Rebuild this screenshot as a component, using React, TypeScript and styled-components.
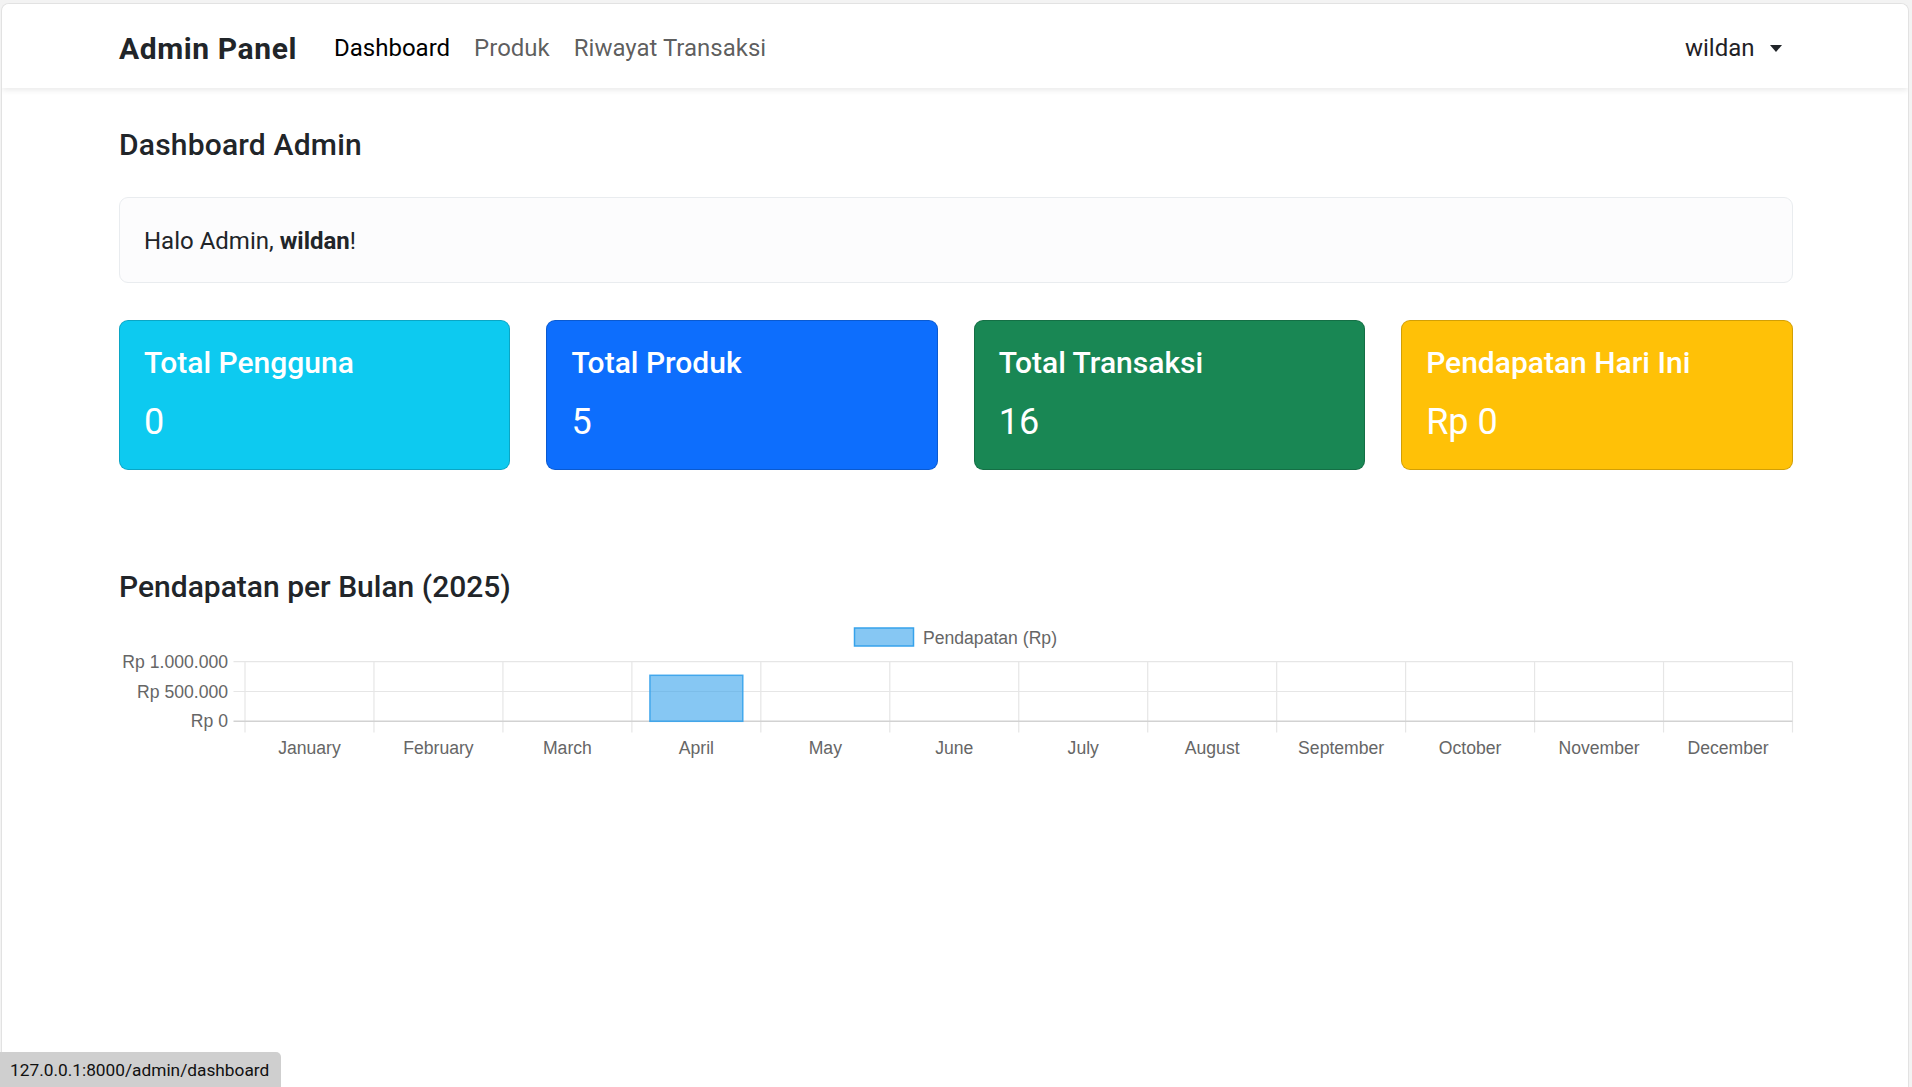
import React from "react";
import styled, { createGlobalStyle } from "styled-components";

const GlobalStyle = createGlobalStyle`
  html, body {
    margin: 0;
    padding: 0;
    background: #f3f3f3;
    font-family: Roboto, "Liberation Sans", Arial, sans-serif;
    color: #212529;
  }
  * { box-sizing: border-box; }
`;

const Window = styled.div`
  margin: 3px 3px 0 1px;
  min-height: 1084px;
  background: #ffffff;
  border: 1px solid #e2e2e2;
  border-bottom: none;
  border-radius: 8px 8px 0 0;
  overflow: hidden;
`;

const Navbar = styled.nav`
  height: 84px;
  background: #ffffff;
  box-shadow: 0 2px 6px rgba(0, 0, 0, 0.09);
  position: relative;
  z-index: 1;
`;

const Container = styled.div`
  width: 1710px;
  margin: 0 auto;
  padding: 0 17.5px 0 19px;
`;

const NavInner = styled(Container)`
  height: 100%;
  display: flex;
  align-items: center;
  padding-top: 4px;
`;

const Brand = styled.a`
  font-size: 30px;
  font-weight: 700;
  line-height: 45px;
  letter-spacing: 0.6px;
  color: #212529;
  text-decoration: none;
  margin-right: 25px;
`;

const NavList = styled.ul`
  display: flex;
  list-style: none;
  margin: 0;
  padding: 0;
`;

const NavLink = styled.a<{ $active?: boolean }>`
  display: block;
  padding: 12px 12px;
  font-size: 24px;
  line-height: 36px;
  text-decoration: none;
  color: ${(p) => (p.$active ? "#000000" : "rgba(0, 0, 0, 0.65)")};
`;

const UserMenu = styled.a`
  margin-left: auto;
  display: flex;
  align-items: center;
  padding: 12px 11px 12px 12px;
  font-size: 24px;
  line-height: 36px;
  color: #1f2226;
  text-decoration: none;
`;

const Caret = styled.span`
  display: inline-block;
  margin-left: 15px;
  width: 0;
  height: 0;
  border-top: 7px solid #212529;
  border-left: 6.5px solid transparent;
  border-right: 6.5px solid transparent;
`;

const Main = styled(Container)`
  padding-top: 39px;
`;

const PageTitle = styled.h2`
  margin: 0 0 34px;
  font-size: 30px;
  line-height: 36px;
  font-weight: 500;
  letter-spacing: 0.2px;
`;

const Alert = styled.div`
  border: 1px solid #e9ecef;
  border-radius: 9px;
  background: #fcfcfd;
  font-size: 24px;
  line-height: 36px;
  color: #212529;
  margin-bottom: 37px;
  padding: 25px 24px 23px;

  strong {
    font-weight: 700;
  }
`;

const CardGrid = styled.div`
  display: grid;
  grid-template-columns: repeat(4, 1fr);
  gap: 36px;
`;

const StatCard = styled.div<{ $bg: string }>`
  background: ${(p) => p.$bg};
  border: 1px solid rgba(0, 0, 0, 0.175);
  border-radius: 9px;
  padding: 24px;
  color: #ffffff;
`;

const CardTitle = styled.h5`
  margin: 0 0 18px;
  font-size: 30px;
  line-height: 36px;
  font-weight: 500;
`;

const CardValue = styled.div`
  font-size: 36px;
  line-height: 46px;
  font-weight: 400;
`;

const SectionTitle = styled.h4`
  margin: 99px 0 11px;
  font-size: 30px;
  line-height: 36px;
  font-weight: 500;
`;

const ChartSvg = styled.svg`
  display: block;
  overflow: visible;
  font-family: "Liberation Sans", Arial, sans-serif;
`;

const StatusBar = styled.div`
  position: fixed;
  left: 0;
  bottom: 0;
  height: 35px;
  padding: 0 12px 0 10px;
  display: flex;
  align-items: center;
  background: #cfcfcf;
  border-top-right-radius: 5px;
  font-size: 17.3px;
  color: #111111;
  font-family: Roboto, "Liberation Sans", sans-serif;
`;

const months = [
  "January",
  "February",
  "March",
  "April",
  "May",
  "June",
  "July",
  "August",
  "September",
  "October",
  "November",
  "December",
];

const revenue = [0, 0, 0, 772000, 0, 0, 0, 0, 0, 0, 0, 0];

const RevenueChart: React.FC = () => {
  const left = 126;
  const right = 1673.5;
  const colW = (right - left) / 12;
  const top = 45.7;
  const zero = 105.3;
  const max = 1000000;
  const yOf = (v: number) => zero - ((zero - top) * v) / max;
  const grid = "#e6e6e6";
  const barW = colW * 0.8 * 0.9;
  const yTicks = [
    { v: 1000000, label: "Rp 1.000.000" },
    { v: 500000, label: "Rp 500.000" },
    { v: 0, label: "Rp 0" },
  ];
  return (
    <ChartSvg width={1673.5} height={150} viewBox="0 0 1673.5 150">
      <rect x={735.5} y={12} width={59} height={18} fill="rgba(54,162,235,0.6)" stroke="rgb(54,162,235)" strokeWidth={1.5} />
      <text x={804} y={28} fontSize={17.6} fill="#666">Pendapatan (Rp)</text>
      {Array.from({ length: 13 }).map((_, i) => (
        <line key={"v" + i} x1={left + i * colW} x2={left + i * colW} y1={top} y2={116.5} stroke={grid} strokeWidth={1.2} />
      ))}
      {yTicks.map((t) => (
        <g key={t.label}>
          <line x1={114.5} x2={right} y1={yOf(t.v)} y2={yOf(t.v)} stroke={t.v === 0 ? "#d2d2d2" : grid} strokeWidth={t.v === 0 ? 1.6 : 1.2} />
          <text x={109} y={yOf(t.v) + 6} fontSize={17.6} fill="#666" textAnchor="end">{t.label}</text>
        </g>
      ))}
      {revenue.map((v, i) =>
        v > 0 ? (
          <rect key={"b" + i} x={left + (i + 0.5) * colW - barW / 2} y={yOf(v)} width={barW} height={zero - yOf(v)} fill="rgba(54,162,235,0.6)" stroke="rgba(54,162,235,0.9)" strokeWidth={1.5} />
        ) : null
      )}
      {months.map((m, i) => (
        <text key={m} x={left + (i + 0.5) * colW} y={138} fontSize={17.6} fill="#666" textAnchor="middle">{m}</text>
      ))}
    </ChartSvg>
  );
};

const stats = [
  { title: "Total Pengguna", value: "0", bg: "#0dcaf0" },
  { title: "Total Produk", value: "5", bg: "#0d6efd" },
  { title: "Total Transaksi", value: "16", bg: "#198754" },
  { title: "Pendapatan Hari Ini", value: "Rp 0", bg: "#ffc107" },
];

export default function App() {
  return (
    <>
      <GlobalStyle />
      <Window>
        <Navbar>
          <NavInner>
            <Brand href="#">Admin Panel</Brand>
            <NavList>
              <li><NavLink $active href="#">Dashboard</NavLink></li>
              <li><NavLink href="#">Produk</NavLink></li>
              <li><NavLink href="#">Riwayat Transaksi</NavLink></li>
            </NavList>
            <UserMenu href="#">
              wildan
              <Caret />
            </UserMenu>
          </NavInner>
        </Navbar>
        <Main>
          <PageTitle>Dashboard Admin</PageTitle>
          <Alert>
            Halo Admin, <strong>wildan</strong>!
          </Alert>
          <CardGrid>
            {stats.map((s) => (
              <StatCard key={s.title} $bg={s.bg}>
                <CardTitle>{s.title}</CardTitle>
                <CardValue>{s.value}</CardValue>
              </StatCard>
            ))}
          </CardGrid>
          <SectionTitle>Pendapatan per Bulan (2025)</SectionTitle>
          <RevenueChart />
        </Main>
      </Window>
      <StatusBar>127.0.0.1:8000/admin/dashboard</StatusBar>
    </>
  );
}
